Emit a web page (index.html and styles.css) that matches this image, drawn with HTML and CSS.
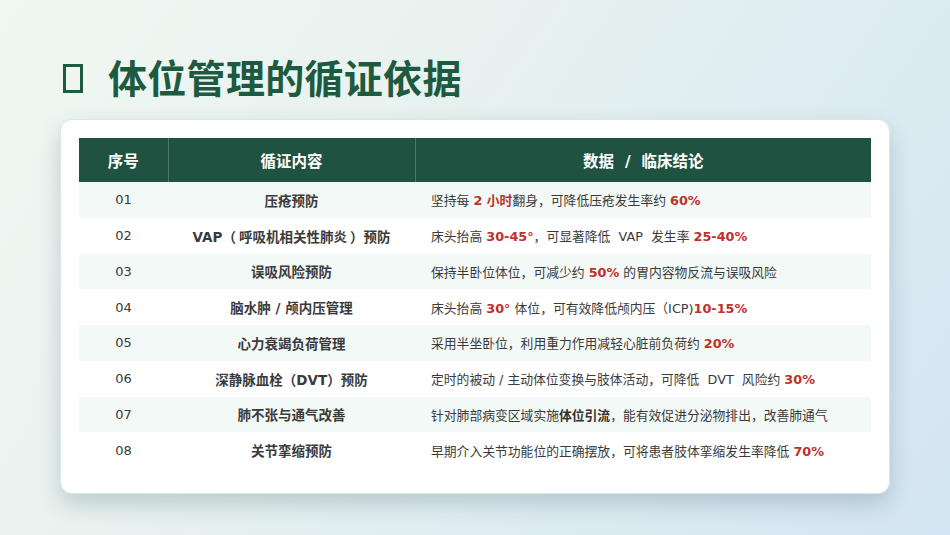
FILE: index.html
```html
<!DOCTYPE html>
<html lang="zh">
<head>
<meta charset="utf-8">
<link rel="stylesheet" href="styles.css">
</head>
<body>
<div class="page">
  <h1 class="title"><span class="tofu"></span><span class="title-text">体位管理的循证依据</span></h1>
  <div class="card">
    <table class="evidence">
      <colgroup>
        <col class="c-no"><col class="c-item"><col class="c-data">
      </colgroup>
      <thead>
        <tr><th>序号</th><th>循证内容</th><th>数据<span class="slash">/</span>临床结论</th></tr>
      </thead>
      <tbody>
        <tr><td class="no">01</td><td class="item">压疮预防</td><td class="data">坚持每 <b class="hl">2 小时</b>翻身，可降低压疮发生率约 <b class="hl">60%</b></td></tr>
        <tr><td class="no">02</td><td class="item">VAP（<span class="inner">呼吸机相关性肺炎</span>）预防</td><td class="data">床头抬高 <b class="hl">30-45°</b>，可显著降低&nbsp; VAP&nbsp; 发生率 <b class="hl">25-40%</b></td></tr>
        <tr><td class="no">03</td><td class="item">误吸风险预防</td><td class="data">保持半卧位体位，可减少约 <b class="hl">50%</b> 的胃内容物反流与误吸风险</td></tr>
        <tr><td class="no">04</td><td class="item">脑水肿 / 颅内压管理</td><td class="data">床头抬高 <b class="hl">30°</b> 体位，可有效降低颅内压（ICP)<b class="hl">10-15%</b></td></tr>
        <tr><td class="no">05</td><td class="item">心力衰竭负荷管理</td><td class="data">采用半坐卧位，利用重力作用减轻心脏前负荷约 <b class="hl">20%</b></td></tr>
        <tr><td class="no">06</td><td class="item">深静脉血栓（DVT）预防</td><td class="data">定时的被动 / 主动体位变换与肢体活动，可降低&nbsp; DVT&nbsp; 风险约 <b class="hl">30%</b></td></tr>
        <tr><td class="no">07</td><td class="item">肺不张与通气改善</td><td class="data">针对肺部病变区域实施<b class="strong">体位引流</b>，能有效促进分泌物排出，改善肺通气</td></tr>
        <tr><td class="no">08</td><td class="item">关节挛缩预防</td><td class="data">早期介入关节功能位的正确摆放，可将患者肢体挛缩发生率降低 <b class="hl">70%</b></td></tr>
      </tbody>
    </table>
  </div>
</div>
</body>
</html>
```

FILE: styles.css
```css
* { box-sizing: border-box; }
html, body {
  margin: 0;
  padding: 0;
}
body {
  width: 950px;
  height: 535px;
  overflow: hidden;
  font-family: "DejaVu Sans", "Noto Sans CJK TC", sans-serif;
  background: linear-gradient(125deg, #f1f7f3 0%, #e8f2ef 35%, #dfedf1 65%, #d3e5f2 100%);
}
.page {
  width: 950px;
  height: 535px;
  padding-top: 53px;
}
.title {
  margin: 0 0 0 63px;
  height: 46px;
  display: flex;
  align-items: center;
  gap: 25px;
  font-family: "Noto Sans CJK SC", sans-serif;
  font-size: 39px;
  font-weight: 700;
  color: #1e5a3f;
  line-height: 46px;
}
.tofu {
  display: inline-block;
  width: 20px;
  height: 29px;
  border: 3px solid #1e5a3f;
  margin-top: 4px;
}
.title-text {
  letter-spacing: 0.3px;
}
.card {
  margin: 20px 0 0 60px;
  width: 830px;
  height: 375px;
  background: #ffffff;
  border: 1px solid #d3ebe2;
  border-radius: 12px;
  padding: 18px 18px 0 18px;
  box-shadow: 0 10px 22px rgba(40, 70, 90, 0.22);
}
.evidence {
  width: 792px;
  border-collapse: collapse;
  table-layout: fixed;
}
.c-no { width: 89px; }
.c-item { width: 247px; }
.c-data { width: 456px; }
.evidence th {
  height: 44px;
  background: #1f5240;
  color: #ffffff;
  font-size: 15.5px;
  font-weight: 700;
  text-align: center;
  padding: 0;
  border-left: 1px solid rgba(255, 255, 255, 0.22);
}
.evidence th:first-child { border-left: none; }
.slash {
  margin: 0 11px;
}
.evidence td {
  height: 35.75px;
  padding: 0;
  font-size: 12.8px;
  color: #3a3a3a;
  vertical-align: middle;
}
.evidence tbody tr:nth-child(odd) td { background: #f3f9f6; }
.no {
  text-align: center;
  color: #444444;
  font-size: 13px !important;
}
.item {
  text-align: center;
  font-weight: 700;
  color: #333333;
  font-size: 13.5px !important;
}
.inner {
  margin: 0 3px;
}
.data {
  padding-left: 16px !important;
  color: #444444;
}
.hl {
  color: #c0302c;
  font-weight: 700;
}
.strong {
  color: #333333;
  font-weight: 700;
}
```
